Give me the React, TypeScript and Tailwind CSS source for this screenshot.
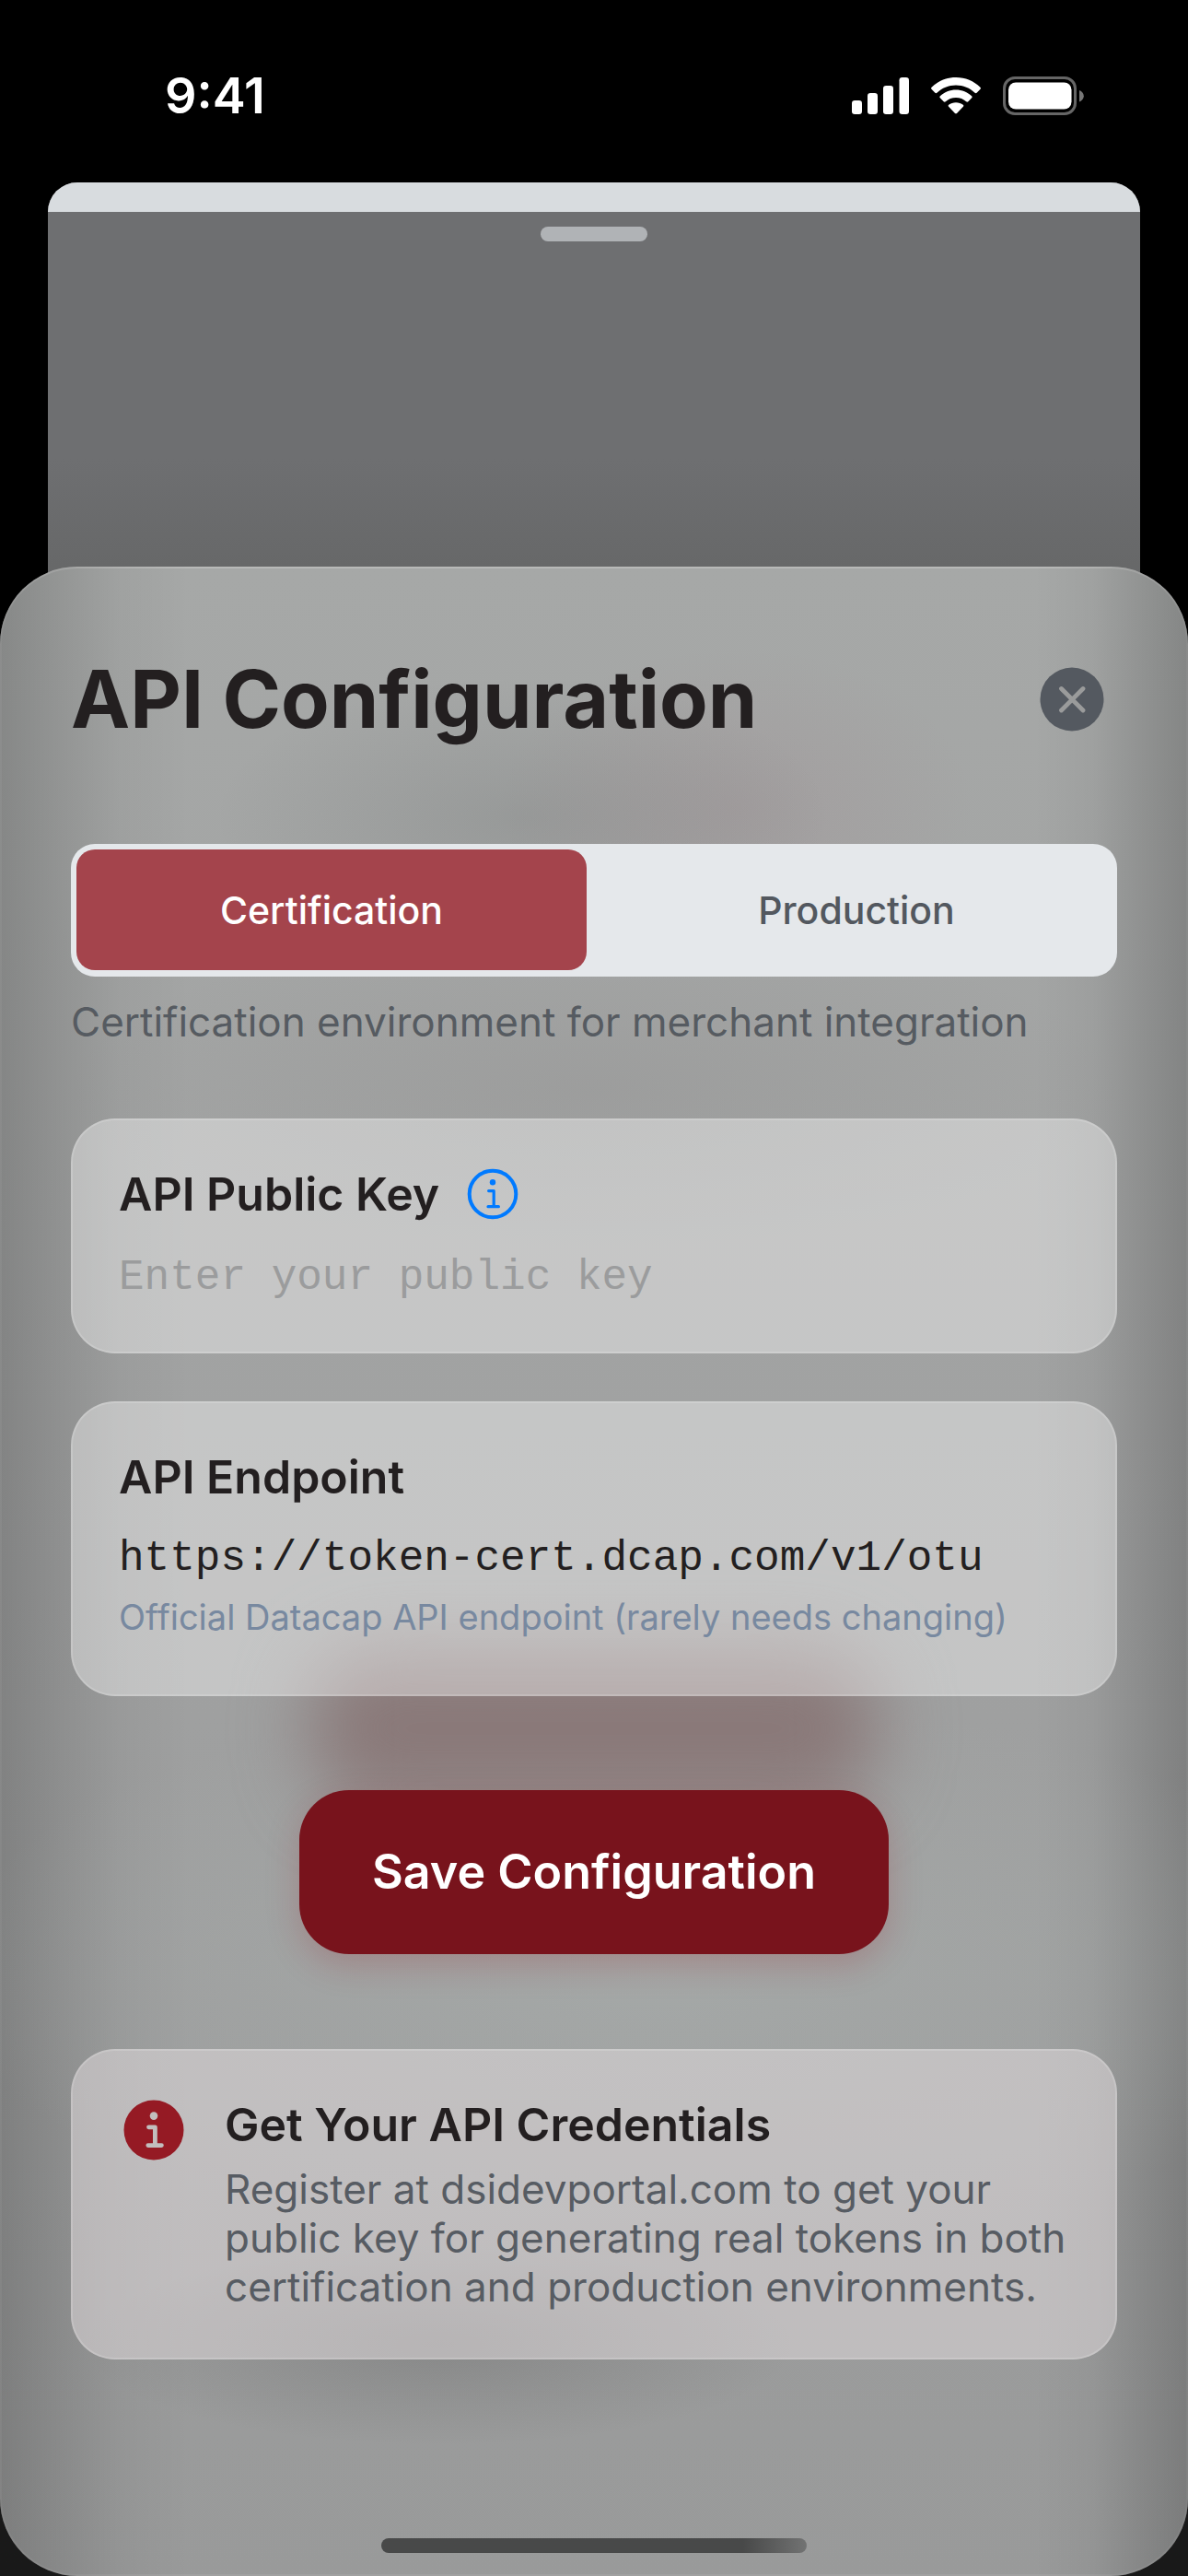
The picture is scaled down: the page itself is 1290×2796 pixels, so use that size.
import { useState } from 'react';
import type { ReactNode } from 'react';

type Environment = 'certification' | 'production';

function SignalIcon() {
  return (
    <svg className="h-10 w-[62px]" viewBox="0 0 62 40" fill="#fff" aria-hidden="true">
      <rect x="0" y="25" width="11" height="15" rx="3.2" />
      <rect x="17" y="17" width="11" height="23" rx="3.2" />
      <rect x="34" y="9" width="11" height="31" rx="3.2" />
      <rect x="51.500" y="0" width="10.500" height="40" rx="3.2" />
    </svg>
  );
}

function WifiIcon() {
  return (
    <svg className="h-10 w-[54px]" viewBox="0 0 54 40" fill="#fff" aria-hidden="true">
      <path d="M27 0C37.200 0 46.500 4 53.400 10.700C54.100 11.400 54.100 12.200 53.500 12.800L49.600 16.700C49 17.300 48.200 17.300 47.600 16.700C42.200 11.600 35 8.500 27 8.500C19 8.500 11.800 11.600 6.400 16.700C5.800 17.300 5 17.300 4.400 16.700L0.500 12.800C-0.100 12.200-0.100 11.400 0.600 10.700C7.500 4 16.800 0 27 0Z" />
      <path d="M27 13.500C33.600 13.500 39.600 16 44.100 20.200C44.800 20.900 44.800 21.700 44.200 22.300L40.300 26.200C39.700 26.800 38.900 26.800 38.200 26.200C35.200 23.600 31.300 22 27 22C22.700 22 18.800 23.600 15.800 26.200C15.100 26.800 14.300 26.800 13.700 26.200L9.800 22.300C9.200 21.700 9.200 20.900 9.900 20.200C14.400 16 20.400 13.500 27 13.500Z" />
      <path d="M27 27.200C30 27.200 32.700 28.200 34.800 29.800C35.500 30.400 35.500 31.200 34.900 31.800L28 38.900C27.400 39.500 26.600 39.500 26 38.900L19.100 31.800C18.500 31.200 18.500 30.400 19.200 29.800C21.300 28.200 24 27.200 27 27.200Z" />
    </svg>
  );
}

function BatteryIcon() {
  return (
    <svg className="h-[42px] w-[88px]" viewBox="0 0 88 42" aria-hidden="true">
      <rect x="1.500" y="1.500" width="77" height="39" rx="11.500" fill="none" stroke="#666" strokeWidth="3" />
      <rect x="6" y="6.500" width="68.500" height="29" rx="8" fill="#fff" />
      <path d="M83 15V27.500C85.800 26.400 87.800 24 87.800 21.200S85.800 16.100 83 15Z" fill="#777" />
    </svg>
  );
}

function InfoOutlineIcon() {
  return (
    <svg className="size-[56px]" viewBox="0 0 56 56" fill="none" stroke="#007aff" strokeLinecap="round" strokeLinejoin="round" aria-hidden="true">
      <circle cx="28" cy="28" r="25.300" strokeWidth="4" />
      <circle cx="28" cy="15.300" r="3.200" fill="#007aff" stroke="none" />
      <path d="M23.600 24.600H29.200V41.300M23 41.700H34.400" strokeWidth="3.200" />
    </svg>
  );
}

function InfoSolidIcon() {
  return (
    <svg className="size-[72px] shrink-0" viewBox="0 0 72 72" aria-hidden="true">
      <circle cx="36" cy="36" r="32.500" fill="#951a24" />
      <circle cx="36" cy="20.600" r="4.300" fill="#c2bebe" />
      <path d="M30.500 32.800H37.400V52.400M29.800 52.600H44.400" fill="none" stroke="#c2bebe" strokeWidth="4.800" strokeLinecap="round" strokeLinejoin="round" />
    </svg>
  );
}

function Card({ tint, children }: { tint: string; children: ReactNode }) {
  return (
    <div className={`relative rounded-[48px] px-[52px] py-[52px] shadow-[inset_0_0_0_2px_rgba(255,255,255,0.16)] ${tint}`}>
      {children}
    </div>
  );
}

function Segment({ label, active, onClick }: { label: string; active: boolean; onClick: () => void }) {
  return (
    <button
      type="button"
      aria-pressed={active}
      onClick={onClick}
      className={`flex-1 rounded-[20px] text-[41px] leading-[48px] font-medium ${active ? 'bg-[#a4444c] text-white' : 'text-[#53585f]'}`}
    >
      {label}
    </button>
  );
}

const endpoints: Record<Environment, string> = {
  certification: 'https://token-cert.dcap.com/v1/otu',
  production: 'https://token.dcap.com/v1/otu',
};

const inputStyle =
  "block h-[54px] w-full bg-transparent p-0 font-['Liberation_Mono','DejaVu_Sans_Mono',monospace] text-[46px] leading-[54px] text-[#231f20] outline-none placeholder:text-[#9b9c9d] placeholder:opacity-100";

export default function App() {
  const [environment, setEnvironment] = useState<Environment>('certification');
  const [publicKey, setPublicKey] = useState('');

  return (
    <div className="flex min-h-screen flex-col bg-linear-to-b from-black from-60% to-[#191919] to-90% font-['Inter','Liberation_Sans',sans-serif] text-[#231f20]">
      <header className="flex h-[198px] items-center justify-between pt-[10px] pr-[113px] pl-[179px]">
        <time className="text-[54px] leading-[60px] font-semibold text-white">9:41</time>
        <div className="flex items-center gap-6">
          <SignalIcon />
          <WifiIcon />
          <BatteryIcon />
        </div>
      </header>

      <div className="mx-[4%] h-[500px] overflow-hidden rounded-t-[32px] bg-linear-to-b from-[#6e6f71] from-60% to-[#626363]">
        <div className="h-8 bg-[#d8dcdf]" />
        <div className="mx-auto mt-4 h-4 w-[116px] rounded-full bg-[#b0b3b6]" />
      </div>

      <main className="relative isolate mt-[-83px] flex grow flex-col overflow-hidden rounded-[84px] bg-linear-to-b from-[#a6a8a7] via-[#a0a1a1] to-[#999a9a] px-[77px] pt-[92px] pb-[25px] shadow-[inset_0_2px_1px_rgba(255,255,255,0.14),inset_0_0_0_2px_rgba(255,255,255,0.08)]">
        <div className="absolute inset-0 -z-10 bg-[linear-gradient(to_right,rgba(0,0,0,0.19),rgba(0,0,0,0.11)_5%,rgba(0,0,0,0.04)_10%,transparent_16%,transparent_87%,rgba(0,0,0,0.04)_92%,rgba(0,0,0,0.12)_96%,rgba(0,0,0,0.2))]" />
        <div className="absolute inset-0 -z-10 bg-[radial-gradient(ellipse_26%_7%_at_44%_12.500%,rgba(70,75,75,0.14),transparent),radial-gradient(ellipse_20%_8%_at_62%_12%,rgba(150,110,120,0.15),transparent),radial-gradient(ellipse_45%_8%_at_50%_26%,rgba(110,105,105,0.12),transparent),radial-gradient(ellipse_30%_5%_at_37%_88.500%,rgba(60,60,60,0.2),transparent),radial-gradient(ellipse_60%_14%_at_55%_70%,rgba(172,178,176,0.5),transparent)]" />

        <div className="flex items-center justify-between">
          <h1 className="text-[86px] leading-[104px] font-bold">API Configuration</h1>
          <button type="button" aria-label="Close" className="mr-[14px]">
            <svg className="size-[70px]" viewBox="0 0 70 70" aria-hidden="true">
              <circle cx="35" cy="35" r="34.500" fill="#545960" />
              <path d="M23.500 23.500L47 47M47 23.500L23.500 47" stroke="#9a9b9b" strokeWidth="4.800" strokeLinecap="round" />
            </svg>
          </button>
        </div>

        <div role="group" aria-label="Environment" className="mt-[105px] flex h-36 gap-4 rounded-[26px] bg-[#e5e8eb] p-[6px] pb-[7px]">
          <Segment label="Certification" active={environment === 'certification'} onClick={() => setEnvironment('certification')} />
          <Segment label="Production" active={environment === 'production'} onClick={() => setEnvironment('production')} />
        </div>
        <p className="mt-[23px] text-[44px] leading-[53px] text-[#565b61]">
          {environment === 'certification' ? 'Certification environment for merchant integration' : 'Production environment for live payments'}
        </p>

        <div className="mt-[78px] flex flex-col gap-[52px]">
          <Card tint="bg-white/39">
            <div className="flex h-[60px] items-center gap-[30px]">
              <label htmlFor="public-key" className="text-[50px] leading-[60px] font-semibold">API Public Key</label>
              <button type="button" aria-label="About the API public key">
                <InfoOutlineIcon />
              </button>
            </div>
            <input
              id="public-key"
              type="text"
              placeholder="Enter your public key"
              value={publicKey}
              onChange={(event) => setPublicKey(event.target.value)}
              className={`mt-[34px] mb-[3px] ${inputStyle}`}
            />
          </Card>

          <div className="relative">
            <div className="absolute inset-x-[23%] -bottom-[120px] -z-10 h-[170px] rounded-[70px] bg-[#877474]/90 blur-[40px]" />
            <Card tint="bg-white/39">
              <label htmlFor="endpoint" className="block text-[50px] leading-[60px] font-semibold">API Endpoint</label>
              <input
                id="endpoint"
                type="text"
                readOnly
                value={endpoints[environment]}
                className={`mt-8 ${inputStyle}`}
              />
              <p className="mt-3 mb-[10px] text-[38px] leading-[48px] text-[#7889a0]">Official Datacap API endpoint (rarely needs changing)</p>
            </Card>
          </div>
        </div>

        <button
          type="button"
          className="mt-[102px] self-center rounded-[54px] bg-[#78131c] px-[79px] py-[59px] text-[52px] leading-[60px] font-semibold text-white shadow-[0_12px_36px_rgba(149,26,36,0.22)]"
        >
          Save Configuration
        </button>

        <section className="mt-[103px]">
          <Card tint="bg-[#dfd9da]/55">
            <div className="flex gap-[41px] pl-[2px]">
              <InfoSolidIcon />
              <div>
                <h2 className="text-[50px] leading-[60px] font-semibold">Get Your API Credentials</h2>
                <p className="mt-[14px] text-[44px] leading-[53px] text-[#575c63]">
                  Register at dsidevportal.com to get your public key for generating real tokens in both certification and production environments.
                </p>
              </div>
            </div>
          </Card>
        </section>

        <div className="mx-auto mt-auto h-4 w-[462px] rounded-full bg-linear-to-r from-[#484949] from-85% to-[#727373]" />
      </main>
    </div>
  );
}
